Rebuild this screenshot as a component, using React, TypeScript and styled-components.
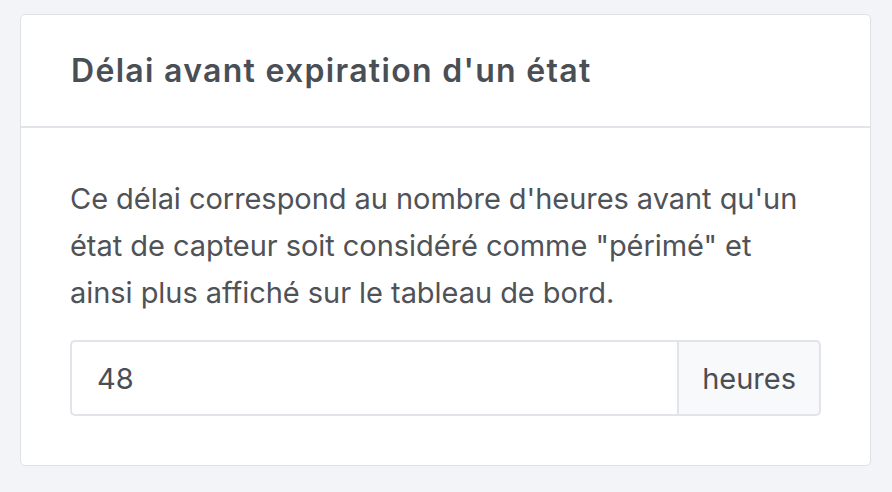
import styled, { createGlobalStyle } from "styled-components";

const GlobalStyle = createGlobalStyle`
  html, body {
    margin: 0;
    padding: 0;
    background: #f3f4f7;
  }
  body {
    font-family: Inter, "Liberation Sans", Arial, sans-serif;
    color: #4f5257;
  }
`;

const Page = styled.div`
  padding: 14px 21px 26px 20px;
`;

const Card = styled.div`
  background: #ffffff;
  border: 1px solid #dfe1e6;
  border-radius: 5px;
`;

const CardHeader = styled.div`
  height: 111px;
  display: flex;
  align-items: center;
  padding: 0 50px;
  border-bottom: 2px solid #e2e4e9;
`;

const Title = styled.h2`
  margin: 0;
  font-size: 32px;
  font-weight: 600;
  letter-spacing: 1.3px;
  color: #4a4e55;
`;

const CardBody = styled.div`
  padding: 47px 49px 49px 49px;
`;

const Text = styled.p`
  margin: 0 0 24px;
  font-size: 29px;
  line-height: 47px;
  letter-spacing: -0.05px;
  color: #4f5257;
`;

const InputGroup = styled.div`
  display: flex;
  height: 76px;
`;

const Field = styled.div`
  flex: 1;
  display: flex;
  align-items: center;
  padding: 0 25px;
  border: 2px solid #e2e4ea;
  border-right: none;
  border-radius: 5px 0 0 5px;
  font-size: 29px;
  color: #4a4e55;
`;

const Addon = styled.div`
  display: flex;
  align-items: center;
  padding: 0 23px;
  background: #f8f9fb;
  border: 2px solid #e2e4ea;
  border-radius: 0 5px 5px 0;
  font-size: 29px;
  color: #4a4e55;
`;

export default function App() {
  return (
    <>
      <GlobalStyle />
      <Page>
        <Card>
          <CardHeader>
            <Title>Délai avant expiration d'un état</Title>
          </CardHeader>
          <CardBody>
            <Text>
              Ce délai correspond au nombre d'heures avant qu'un état de capteur
              soit considéré comme "périmé" et ainsi plus affiché sur le tableau
              de bord.
            </Text>
            <InputGroup>
              <Field>48</Field>
              <Addon>heures</Addon>
            </InputGroup>
          </CardBody>
        </Card>
      </Page>
    </>
  );
}
